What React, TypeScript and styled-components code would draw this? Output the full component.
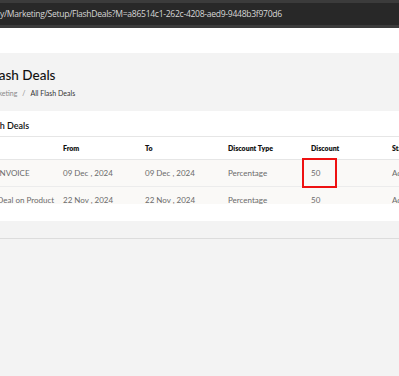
import React from 'react';
import styled, { createGlobalStyle } from 'styled-components';

const GlobalStyle = createGlobalStyle`
  html, body { margin: 0; padding: 0; background: #f3f3f3; overflow: hidden; }
  body { font-family: Lato, "Open Sans", sans-serif; }
`;

const Chrome = styled.div`
  height: 28px;
  background: #3b3b3b;
  display: flex;
  flex-direction: column;
`;

const AddressBar = styled.div`
  height: 22px;
  margin-top: 3px;
  background: #282828;
  color: #d6d6d6;
  font-family: "Open Sans", "Noto Sans", sans-serif;
  font-size: 8.6px;
  letter-spacing: -0.3px;
  line-height: 22px;
  white-space: nowrap;
  overflow: hidden;
`;

const TopGap = styled.div`
  height: 25px;
  background: #fff;
`;

const PageHead = styled.div`
  height: 58px;
  background: #f3f3f3;
  margin-left: -12px;
  box-sizing: border-box;
  padding-top: 14px;
`;

const Title = styled.h1`
  margin: 0;
  font-size: 13.5px;
  font-weight: 500;
  color: #111;
  line-height: 17px;
`;

const Crumbs = styled.div`
  margin-top: 5px;
  margin-left: -2px;
  font-size: 7px;
  color: #888;
  display: flex;
  gap: 5px;
`;

const Current = styled.span`
  color: #333;
`;

const Card = styled.section`
  background: #ffffff;
  height: 110px;
  overflow: hidden;
`;

const CardHead = styled.div`
  height: 26px;
  box-sizing: border-box;
  padding-top: 9px;
  margin-left: -16px;
  font-size: 9px;
  font-weight: 600;
  color: #111;
  border-bottom: 1px solid #e6e6e6;
`;

const TableWrap = styled.div`
  height: 67px;
  overflow: hidden;
`;

const Table = styled.table`
  border-collapse: collapse;
  table-layout: fixed;
  margin-left: -23px;
  width: 516px;
`;

const Th = styled.th<{ w: number }>`
  width: ${p => p.w}px;
  text-align: left;
  font-size: 7px;
  font-weight: 800;
  color: #111;
  height: 22px;
  padding: 0;
  border-bottom: 1px solid #e6e6e6;
  white-space: nowrap;
`;

const Tr = styled.tr`
  background: #faf9f7;
`;

const Td = styled.td`
  height: 26px;
  padding: 0;
  font-size: 8px;
  color: #6a6a6a;
  white-space: nowrap;
  border-bottom: 1px solid #ececec;
  position: relative;
`;

const Mark = styled.span`
  position: absolute;
  left: -9px;
  top: -2px;
  width: 31px;
  height: 26px;
  border: 2px solid #ee1111;
`;

const Footer = styled.div`
  height: 17px;
  background: #f3f3f3;
  border-bottom: 1px solid #dcdcdc;
`;

const rows = [
  { name: 'Flash INVOICE', from: '09 Dec , 2024', to: '09 Dec , 2024', type: 'Percentage', disc: '50', status: 'Active', mark: true },
  { name: 'Flash Deal on Product', from: '22 Nov , 2024', to: '22 Nov , 2024', type: 'Percentage', disc: '50', status: 'Active', mark: false },
];

export default function App() {
  return (
    <>
      <GlobalStyle />
      <Chrome>
        <AddressBar>y/Marketing/Setup/FlashDeals?M=a86514c1-262c-4208-aed9-9448b3f970d6</AddressBar>
      </Chrome>
      <TopGap />
      <PageHead>
        <Title>Flash Deals</Title>
        <Crumbs>
          <span>Marketing</span>
          <span>/</span>
          <Current>All Flash Deals</Current>
        </Crumbs>
      </PageHead>
      <Card>
        <CardHead>Flash Deals</CardHead>
        <TableWrap>
          <Table>
            <thead>
              <tr>
                <Th w={86}>Name</Th>
                <Th w={82}>From</Th>
                <Th w={83}>To</Th>
                <Th w={83}>Discount Type</Th>
                <Th w={81}>Discount</Th>
                <Th w={101}>Status</Th>
              </tr>
            </thead>
            <tbody>
              {rows.map(r => (
                <Tr key={r.name}>
                  <Td>{r.name}</Td>
                  <Td>{r.from}</Td>
                  <Td>{r.to}</Td>
                  <Td>{r.type}</Td>
                  <Td>
                    {r.disc}
                    {r.mark && <Mark />}
                  </Td>
                  <Td>{r.status}</Td>
                </Tr>
              ))}
            </tbody>
          </Table>
        </TableWrap>
      </Card>
      <Footer />
    </>
  );
}
